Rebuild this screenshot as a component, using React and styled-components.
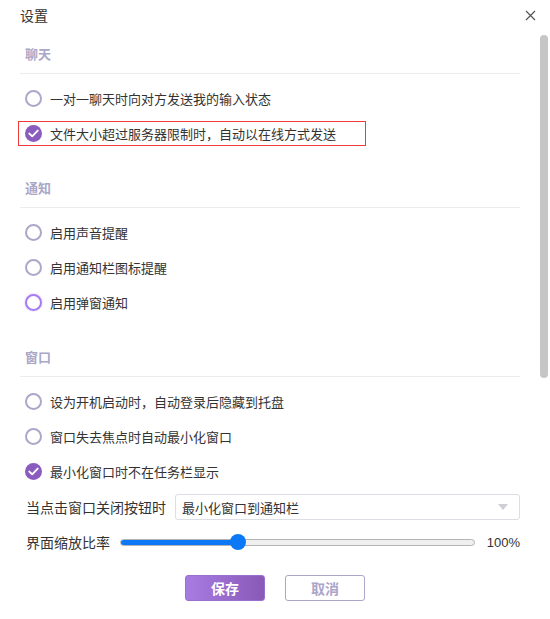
import React from "react";
import styled, { createGlobalStyle, css } from "styled-components";

const Global = createGlobalStyle`
  html, body { margin: 0; padding: 0; background: #fff; }
  body { font-family: "Noto Sans CJK SC", "Noto Sans", sans-serif; color: #333; }
  * { box-sizing: border-box; }
`;

const Window = styled.div`
  width: 550px;
  height: 619px;
  display: flex;
  flex-direction: column;
  background: #fff;
  overflow: hidden;
`;

const TitleBar = styled.div`
  height: 30px;
  display: flex;
  align-items: center;
  justify-content: space-between;
  padding: 0 14px 0 20px;
`;

const Title = styled.div`
  font-size: 14px;
  color: #333;
  line-height: 1;
`;

const Close = styled.div`
  width: 12px;
  height: 12px;
  display: flex;
  align-items: center;
  justify-content: center;
`;

const Body = styled.div`
  flex: 1;
  display: flex;
  min-height: 0;
`;

const Content = styled.div`
  width: 500px;
  margin-left: 20px;
  padding-top: 3px;
  display: flex;
  flex-direction: column;
`;

const ScrollTrack = styled.div`
  margin-left: 20px;
  width: 8px;
  padding-top: 5px;
`;

const ScrollThumb = styled.div`
  width: 8px;
  height: 343px;
  border-radius: 4px;
  background: #c6c6c6;
`;

const Section = styled.section`
  margin-bottom: ${(p) => (p.$last ? 0 : 16)}px;
`;

const SectionHeader = styled.div`
  height: 41px;
  display: flex;
  align-items: center;
  padding-left: 5px;
  font-size: 13px;
  font-weight: 700;
  color: #aaa7c7;
  border-bottom: 1px solid #ececec;
`;

const List = styled.div`
  padding-top: 7px;
`;

const Row = styled.div`
  height: 35px;
  display: flex;
  align-items: center;
  padding-left: 5px;
`;

const Label = styled.label`
  display: inline-flex;
  align-items: center;
  gap: 8px;
  font-size: 13px;
  color: #333;
  height: 25px;
  ${(p) =>
    p.$highlight &&
    css`
      margin-left: -7px;
      padding-left: 6px;
      width: 348px;
      border: 1px solid #f03a3a;
    `}
`;

const Radio = styled.span`
  width: 17px;
  height: 17px;
  border-radius: 50%;
  flex: none;
  display: inline-flex;
  align-items: center;
  justify-content: center;
  border: 2px solid #aba7c9;
  ${(p) =>
    p.$checked &&
    css`
      border: none;
      background: #8a5cbd;
    `}
  ${(p) =>
    p.$focus &&
    css`
      border-color: #a67af0;
      box-shadow: 0 0 2px rgba(166, 122, 240, 0.6);
    `}
`;

const FieldRow = styled.div`
  display: flex;
  align-items: center;
  padding-left: 6px;
  height: ${(p) => p.$h}px;
`;

const FieldLabel = styled.span`
  font-size: 14px;
  color: #333;
  white-space: nowrap;
  margin-right: ${(p) => p.$gap}px;
`;

const Select = styled.div`
  flex: 1;
  height: 26px;
  border: 1px solid #dddde6;
  border-radius: 3px;
  display: flex;
  align-items: center;
  justify-content: space-between;
  padding: 0 11px 0 6px;
  font-size: 13px;
  color: #333;
`;

const Arrow = styled.span`
  width: 0;
  height: 0;
  border-left: 5px solid transparent;
  border-right: 5px solid transparent;
  border-top: 6px solid #cfcfd6;
`;

const SliderWrap = styled.div`
  width: 357px;
  height: 16px;
  position: relative;
  display: flex;
  align-items: center;
`;

const Track = styled.div`
  width: 100%;
  height: 7px;
  border-radius: 4px;
  background: #efefef;
  border: 1px solid #b4b4b4;
  overflow: hidden;
`;

const Fill = styled.div`
  height: 100%;
  background: #0b78f5;
`;

const Thumb = styled.div`
  position: absolute;
  top: 0;
  width: 16px;
  height: 16px;
  margin-left: -8px;
  border-radius: 50%;
  background: #0b78f5;
`;

const Percent = styled.span`
  margin-left: 12px;
  font-size: 13px;
  font-family: "Liberation Sans", Arial, sans-serif;
  color: #333;
`;

const Footer = styled.div`
  margin-top: 16px;
  display: flex;
  justify-content: center;
  gap: 20px;
  margin-left: -20px;
  margin-right: -30px;
`;

const Button = styled.button`
  width: 80px;
  height: 26px;
  border-radius: 3px;
  font-family: "Noto Sans CJK SC", sans-serif;
  font-size: 14px;
  font-weight: 700;
  display: flex;
  align-items: center;
  justify-content: center;
  padding: 0;
  ${(p) =>
    p.$primary
      ? css`
          border: 1px solid #9a6fd0;
          color: #fff;
          background: linear-gradient(90deg, #a77ce2, #8a59b7);
        `
      : css`
          border: 1px solid #aba5c9;
          color: #aba5c9;
          background: #fff;
        `}
`;

const Check = () => (
  <svg width="11" height="9" viewBox="0 0 11 9">
    <path d="M1.3 4.6 L4.2 7.3 L9.7 1.6" fill="none" stroke="#fff" strokeWidth="1.9" strokeLinecap="round" strokeLinejoin="round" />
  </svg>
);

const Option = ({ text, checked, focus, highlight }) => (
  <Row>
    <Label $highlight={highlight}>
      <Radio $checked={checked} $focus={focus}>{checked && <Check />}</Radio>
      {text}
    </Label>
  </Row>
);

const sections = [
  {
    title: "聊天",
    items: [
      { text: "一对一聊天时向对方发送我的输入状态" },
      { text: "文件大小超过服务器限制时，自动以在线方式发送", checked: true, highlight: true },
    ],
  },
  {
    title: "通知",
    items: [
      { text: "启用声音提醒" },
      { text: "启用通知栏图标提醒" },
      { text: "启用弹窗通知", focus: true },
    ],
  },
  {
    title: "窗口",
    items: [
      { text: "设为开机启动时，自动登录后隐藏到托盘" },
      { text: "窗口失去焦点时自动最小化窗口" },
      { text: "最小化窗口时不在任务栏显示", checked: true },
    ],
  },
];

export default function App() {
  const min = 50, max = 200, value = 100;
  const pct = ((value - min) / (max - min)) * 100;
  return (
    <Window>
      <Global />
      <TitleBar>
        <Title>设置</Title>
        <Close>
          <svg width="11" height="11" viewBox="0 0 11 11">
            <path d="M1 1 L10 10 M10 1 L1 10" stroke="#555" strokeWidth="1.2" />
          </svg>
        </Close>
      </TitleBar>
      <Body>
        <Content>
          {sections.map((s, i) => (
            <Section key={s.title} $last={i === sections.length - 1}>
              <SectionHeader>{s.title}</SectionHeader>
              <List>
                {s.items.map((it) => (
                  <Option key={it.text} {...it} />
                ))}
              </List>
            </Section>
          ))}
          <FieldRow $h={36}>
            <FieldLabel $gap={9}>当点击窗口关闭按钮时</FieldLabel>
            <Select>
              最小化窗口到通知栏
              <Arrow />
            </Select>
          </FieldRow>
          <FieldRow $h={34}>
            <FieldLabel $gap={10}>界面缩放比率</FieldLabel>
            <SliderWrap>
              <Track>
                <Fill style={{ width: `${pct}%` }} />
              </Track>
              <Thumb style={{ left: `${pct}%` }} />
            </SliderWrap>
            <Percent>100%</Percent>
          </FieldRow>
          <Footer>
            <Button $primary>保存</Button>
            <Button>取消</Button>
          </Footer>
        </Content>
        <ScrollTrack>
          <ScrollThumb />
        </ScrollTrack>
      </Body>
    </Window>
  );
}
